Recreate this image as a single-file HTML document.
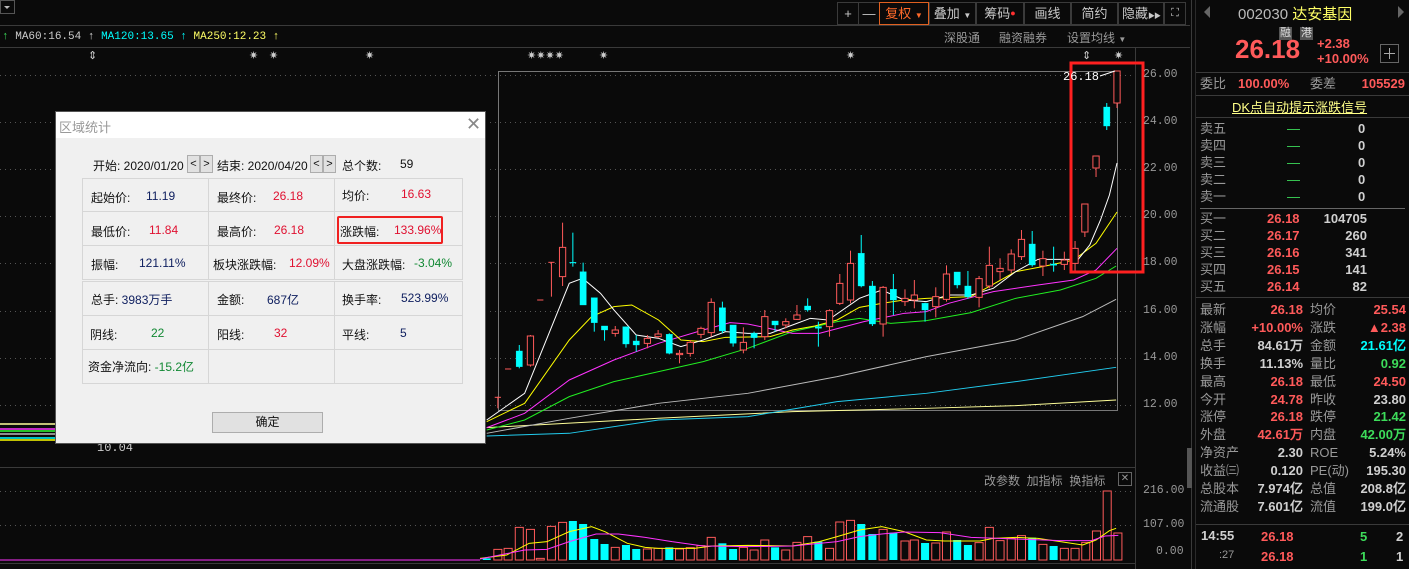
<!DOCTYPE html>
<html><head><meta charset="utf-8">
<style>
*{margin:0;padding:0;box-sizing:border-box}
body{width:1409px;height:569px;background:#0a0a0a;overflow:hidden;position:relative;font-family:"Liberation Sans","Noto Sans CJK SC",sans-serif;color:#c8c8c8}
.a{position:absolute;white-space:nowrap}
.mono{font-family:"Liberation Mono","Noto Sans CJK SC",monospace}
.tb{position:absolute;top:2px;height:23px;border:1px solid #3a3a3a;color:#c8c8c8;font-size:13px;line-height:21px;text-align:center;white-space:nowrap;overflow:hidden}
.r{color:#ff5a5a}.c{color:#00ffff}.g{color:#3ddc5a}.w{color:#d0d0d0}.y{color:#ffff55}
.rp{font-size:13px;line-height:17px}
.num{font-weight:bold;font-family:"Liberation Sans",sans-serif}
.dlg{position:absolute;left:55px;top:111px;width:431px;height:333px;background:#f0f0f0;border:1px solid #555;font-size:12px;color:#111}
.cell{position:absolute;border:1px solid #d6d6d6;}
.sb{position:absolute;width:13px;height:18px;background:#e1e1e1;border:1px solid #adadad;font-size:11px;line-height:16px;text-align:center}
</style></head><body>

<svg class="a" style="left:0;top:0" width="1409" height="569">
<line x1="0" y1="25.5" x2="1190" y2="25.5" stroke="#3a3a3a"/>
<line x1="0" y1="47.5" x2="1190" y2="47.5" stroke="#3a3a3a"/>
<line x1="1135.5" y1="47" x2="1135.5" y2="569" stroke="#3a3a3a"/>
<line x1="1191.5" y1="0" x2="1191.5" y2="569" stroke="#3a3a3a"/>
<line x1="1195.5" y1="0" x2="1195.5" y2="569" stroke="#2a2a2a"/>
<line x1="0" y1="467.5" x2="1135" y2="467.5" stroke="#3a3a3a"/>
<line x1="0" y1="563.5" x2="1135" y2="563.5" stroke="#3a3a3a"/>
<g stroke="#555" stroke-dasharray="1,4">
<line x1="0" y1="75.5" x2="1135" y2="75.5"/><line x1="0" y1="122.5" x2="1135" y2="122.5"/>
<line x1="0" y1="169.5" x2="1135" y2="169.5"/><line x1="0" y1="216.5" x2="1135" y2="216.5"/>
<line x1="0" y1="263.5" x2="1135" y2="263.5"/><line x1="0" y1="311.5" x2="1135" y2="311.5"/>
<line x1="0" y1="358.5" x2="1135" y2="358.5"/><line x1="0" y1="405.5" x2="1135" y2="405.5"/>
<line x1="0" y1="491.5" x2="1135" y2="491.5"/><line x1="0" y1="525.5" x2="1135" y2="525.5"/>
</g>
<rect x="498.5" y="71.5" width="619" height="339" fill="none" stroke="#777"/>
<g stroke-width="1.5">
<line x1="0" y1="424" x2="55" y2="424" stroke="#ffff99"/>
<line x1="0" y1="429" x2="55" y2="429" stroke="#ff33ff"/>
<line x1="0" y1="431" x2="55" y2="431" stroke="#33ff33"/>
<line x1="0" y1="434" x2="55" y2="434" stroke="#bbb"/>
<line x1="0" y1="438" x2="55" y2="438" stroke="#00ffff"/>
<line x1="0" y1="440" x2="55" y2="440" stroke="#ffff00"/>
</g>
<g transform="translate(480,200) scale(0.4464,0.3333)" stroke-width="1" fill="none">
<g>
<polyline vector-effect="non-scaling-stroke" stroke="#ffff99" points="15,683 400,655 700,635 1000,625 1200,617 1425,600"/>
<polyline vector-effect="non-scaling-stroke" stroke="#22ccee" points="15,708 200,700 400,660 600,650 800,605 1000,580 1200,545 1425,502"/>
<polyline vector-effect="non-scaling-stroke" stroke="#bbbbbb" points="15,700 200,655 400,610 600,580 800,530 1000,470 1200,420 1350,350 1425,298"/>
<polyline vector-effect="non-scaling-stroke" stroke="#22ee22" points="15,690 100,660 200,590 300,545 400,515 500,485 600,445 700,395 800,365 850,355 920,370 1000,362 1100,338 1200,295 1300,270 1380,235 1425,198"/>
<polyline vector-effect="non-scaling-stroke" stroke="#ff33ff" points="15,683 100,640 200,540 300,480 400,430 500,390 560,368 600,372 700,400 760,400 860,365 950,340 1000,335 1050,310 1150,275 1250,255 1330,240 1380,210 1427,145"/>
<polyline vector-effect="non-scaling-stroke" stroke="#ffff00" points="15,665 100,610 200,420 250,350 300,320 340,315 400,360 450,420 500,425 550,412 650,410 700,390 750,378 800,360 850,322 900,310 950,300 1000,295 1100,290 1200,215 1260,200 1330,180 1380,130 1427,36"/>
<polyline vector-effect="non-scaling-stroke" stroke="#ffffff" points="15,660 100,580 200,250 230,235 270,280 300,330 350,405 400,415 450,440 500,420 550,395 600,400 650,400 700,375 740,355 780,360 850,295 900,270 950,300 1000,305 1050,285 1100,285 1150,265 1200,215 1250,178 1300,178 1340,178 1366,135 1390,60 1410,-15 1427,-111"/>
</g>
<g stroke="#ff5a5a">
<line x1="40" y1="590" x2="40" y2="625" vector-effect="non-scaling-stroke"/><line x1="33" y1="592" x2="47" y2="592" vector-effect="non-scaling-stroke"/>
<line x1="56" y1="507" x2="70" y2="507" vector-effect="non-scaling-stroke"/>
<line x1="113" y1="405" x2="113" y2="500" vector-effect="non-scaling-stroke"/><rect x="106" y="408" width="14" height="87" fill="#0a0a0a" vector-effect="non-scaling-stroke"/>
<line x1="128" y1="300" x2="142" y2="300" vector-effect="non-scaling-stroke"/>
<line x1="160" y1="187" x2="160" y2="290" vector-effect="non-scaling-stroke"/><line x1="153" y1="187" x2="167" y2="187" vector-effect="non-scaling-stroke"/>
<line x1="185" y1="68" x2="185" y2="258" vector-effect="non-scaling-stroke"/><rect x="178" y="142" width="14" height="88" fill="#0a0a0a" vector-effect="non-scaling-stroke"/>
<line x1="303" y1="378" x2="303" y2="410" vector-effect="non-scaling-stroke"/><rect x="296" y="390" width="14" height="10" fill="#0a0a0a" vector-effect="non-scaling-stroke"/>
<line x1="375" y1="405" x2="375" y2="445" vector-effect="non-scaling-stroke"/><rect x="368" y="415" width="14" height="15" fill="#0a0a0a" vector-effect="non-scaling-stroke"/>
<line x1="399" y1="390" x2="399" y2="415" vector-effect="non-scaling-stroke"/><rect x="392" y="402" width="14" height="8" fill="#0a0a0a" vector-effect="non-scaling-stroke"/>
<line x1="447" y1="450" x2="447" y2="490" vector-effect="non-scaling-stroke"/><rect x="440" y="460" width="14" height="4" fill="#0a0a0a" vector-effect="non-scaling-stroke"/>
<line x1="471" y1="420" x2="471" y2="470" vector-effect="non-scaling-stroke"/><rect x="464" y="427" width="14" height="33" fill="#0a0a0a" vector-effect="non-scaling-stroke"/>
<line x1="495" y1="380" x2="495" y2="415" vector-effect="non-scaling-stroke"/><rect x="488" y="385" width="14" height="18" fill="#0a0a0a" vector-effect="non-scaling-stroke"/>
<line x1="518" y1="295" x2="518" y2="410" vector-effect="non-scaling-stroke"/><rect x="511" y="307" width="14" height="91" fill="#0a0a0a" vector-effect="non-scaling-stroke"/>
<line x1="590" y1="382" x2="590" y2="460" vector-effect="non-scaling-stroke"/><rect x="583" y="427" width="14" height="23" fill="#0a0a0a" vector-effect="non-scaling-stroke"/>
<line x1="638" y1="330" x2="638" y2="420" vector-effect="non-scaling-stroke"/><rect x="631" y="350" width="14" height="60" fill="#0a0a0a" vector-effect="non-scaling-stroke"/>
<line x1="685" y1="355" x2="685" y2="385" vector-effect="non-scaling-stroke"/><rect x="678" y="365" width="14" height="10" fill="#0a0a0a" vector-effect="non-scaling-stroke"/>
<line x1="710" y1="315" x2="710" y2="360" vector-effect="non-scaling-stroke"/><rect x="703" y="345" width="14" height="13" fill="#0a0a0a" vector-effect="non-scaling-stroke"/>
<line x1="783" y1="328" x2="783" y2="410" vector-effect="non-scaling-stroke"/><rect x="776" y="332" width="14" height="48" fill="#0a0a0a" vector-effect="non-scaling-stroke"/>
<line x1="806" y1="222" x2="806" y2="315" vector-effect="non-scaling-stroke"/><rect x="799" y="250" width="14" height="60" fill="#0a0a0a" vector-effect="non-scaling-stroke"/>
<line x1="830" y1="152" x2="830" y2="310" vector-effect="non-scaling-stroke"/><rect x="823" y="190" width="14" height="110" fill="#0a0a0a" vector-effect="non-scaling-stroke"/>
<line x1="903" y1="258" x2="903" y2="410" vector-effect="non-scaling-stroke"/><rect x="896" y="262" width="14" height="110" fill="#0a0a0a" vector-effect="non-scaling-stroke"/>
<line x1="952" y1="268" x2="952" y2="318" vector-effect="non-scaling-stroke"/><rect x="945" y="295" width="14" height="10" fill="#0a0a0a" vector-effect="non-scaling-stroke"/>
<line x1="973" y1="240" x2="973" y2="325" vector-effect="non-scaling-stroke"/><rect x="966" y="285" width="14" height="15" fill="#0a0a0a" vector-effect="non-scaling-stroke"/>
<line x1="1021" y1="262" x2="1021" y2="352" vector-effect="non-scaling-stroke"/><rect x="1014" y="290" width="14" height="30" fill="#0a0a0a" vector-effect="non-scaling-stroke"/>
<line x1="1045" y1="196" x2="1045" y2="305" vector-effect="non-scaling-stroke"/><rect x="1038" y="222" width="14" height="76" fill="#0a0a0a" vector-effect="non-scaling-stroke"/>
<line x1="1118" y1="228" x2="1118" y2="322" vector-effect="non-scaling-stroke"/><rect x="1111" y="236" width="14" height="56" fill="#0a0a0a" vector-effect="non-scaling-stroke"/>
<line x1="1141" y1="140" x2="1141" y2="265" vector-effect="non-scaling-stroke"/><rect x="1134" y="196" width="14" height="62" fill="#0a0a0a" vector-effect="non-scaling-stroke"/>
<line x1="1165" y1="175" x2="1165" y2="240" vector-effect="non-scaling-stroke"/><rect x="1158" y="205" width="14" height="10" fill="#0a0a0a" vector-effect="non-scaling-stroke"/>
<line x1="1190" y1="148" x2="1190" y2="220" vector-effect="non-scaling-stroke"/><rect x="1183" y="162" width="14" height="48" fill="#0a0a0a" vector-effect="non-scaling-stroke"/>
<line x1="1213" y1="90" x2="1213" y2="180" vector-effect="non-scaling-stroke"/><rect x="1206" y="118" width="14" height="52" fill="#0a0a0a" vector-effect="non-scaling-stroke"/>
<line x1="1261" y1="152" x2="1261" y2="228" vector-effect="non-scaling-stroke"/><rect x="1254" y="176" width="14" height="22" fill="#0a0a0a" vector-effect="non-scaling-stroke"/>
<line x1="1309" y1="155" x2="1309" y2="210" vector-effect="non-scaling-stroke"/><rect x="1302" y="180" width="14" height="13" fill="#0a0a0a" vector-effect="non-scaling-stroke"/>
<line x1="1333" y1="123" x2="1333" y2="220" vector-effect="non-scaling-stroke"/><rect x="1326" y="145" width="14" height="45" fill="#0a0a0a" vector-effect="non-scaling-stroke"/>
<line x1="1355" y1="12" x2="1355" y2="111" vector-effect="non-scaling-stroke"/><rect x="1348" y="12" width="14" height="84" fill="#0a0a0a" vector-effect="non-scaling-stroke"/>
<line x1="1380" y1="-132" x2="1380" y2="-69" vector-effect="non-scaling-stroke"/><rect x="1373" y="-132" width="14" height="36" fill="#0a0a0a" vector-effect="non-scaling-stroke"/>
<line x1="1427" y1="-387" x2="1427" y2="-276" vector-effect="non-scaling-stroke"/><rect x="1420" y="-387" width="14" height="96" fill="#0a0a0a" vector-effect="non-scaling-stroke"/>
</g>
<g fill="#00ffff" stroke="#00ffff">
<line x1="88" y1="435" x2="88" y2="505" vector-effect="non-scaling-stroke"/><rect x="81" y="453" width="14" height="47"/>
<line x1="208" y1="98" x2="208" y2="200" vector-effect="non-scaling-stroke"/><rect x="201" y="187" width="14" height="2"/>
<line x1="231" y1="188" x2="231" y2="315" vector-effect="non-scaling-stroke"/><rect x="224" y="215" width="14" height="100"/>
<line x1="256" y1="293" x2="256" y2="395" vector-effect="non-scaling-stroke"/><rect x="249" y="293" width="14" height="75"/>
<line x1="279" y1="378" x2="279" y2="422" vector-effect="non-scaling-stroke"/><rect x="272" y="378" width="14" height="12"/>
<line x1="327" y1="380" x2="327" y2="443" vector-effect="non-scaling-stroke"/><rect x="320" y="380" width="14" height="52"/>
<line x1="350" y1="405" x2="350" y2="455" vector-effect="non-scaling-stroke"/><rect x="343" y="423" width="14" height="12"/>
<line x1="424" y1="400" x2="424" y2="463" vector-effect="non-scaling-stroke"/><rect x="417" y="403" width="14" height="57"/>
<line x1="543" y1="305" x2="543" y2="400" vector-effect="non-scaling-stroke"/><rect x="536" y="323" width="14" height="70"/>
<line x1="567" y1="375" x2="567" y2="440" vector-effect="non-scaling-stroke"/><rect x="560" y="375" width="14" height="55"/>
<line x1="614" y1="395" x2="614" y2="445" vector-effect="non-scaling-stroke"/><rect x="607" y="400" width="14" height="13"/>
<line x1="661" y1="363" x2="661" y2="395" vector-effect="non-scaling-stroke"/><rect x="654" y="363" width="14" height="12"/>
<line x1="734" y1="295" x2="734" y2="335" vector-effect="non-scaling-stroke"/><rect x="727" y="318" width="14" height="12"/>
<line x1="758" y1="365" x2="758" y2="440" vector-effect="non-scaling-stroke"/><rect x="751" y="380" width="14" height="5"/>
<line x1="854" y1="105" x2="854" y2="262" vector-effect="non-scaling-stroke"/><rect x="847" y="160" width="14" height="98"/>
<line x1="879" y1="243" x2="879" y2="378" vector-effect="non-scaling-stroke"/><rect x="872" y="258" width="14" height="114"/>
<line x1="926" y1="222" x2="926" y2="345" vector-effect="non-scaling-stroke"/><rect x="919" y="268" width="14" height="32"/>
<line x1="997" y1="308" x2="997" y2="365" vector-effect="non-scaling-stroke"/><rect x="990" y="310" width="14" height="20"/>
<line x1="1069" y1="216" x2="1069" y2="265" vector-effect="non-scaling-stroke"/><rect x="1062" y="216" width="14" height="39"/>
<line x1="1093" y1="213" x2="1093" y2="296" vector-effect="non-scaling-stroke"/><rect x="1086" y="258" width="14" height="32"/>
<line x1="1237" y1="93" x2="1237" y2="200" vector-effect="non-scaling-stroke"/><rect x="1230" y="132" width="14" height="63"/>
<line x1="1285" y1="140" x2="1285" y2="215" vector-effect="non-scaling-stroke"/><rect x="1278" y="192" width="14" height="4"/>
<line x1="1404" y1="-291" x2="1404" y2="-210" vector-effect="non-scaling-stroke"/><rect x="1397" y="-279" width="14" height="57"/>
</g>
</g>
<g transform="translate(480,460) scale(0.4464,0.3333)">
<g fill="#0a0a0a" stroke="#ff5a5a">
<rect x="31" y="268" width="18" height="32" vector-effect="non-scaling-stroke"/>
<rect x="54" y="265" width="18" height="35" vector-effect="non-scaling-stroke"/>
<rect x="79" y="202" width="18" height="98" vector-effect="non-scaling-stroke"/>
<rect x="104" y="208" width="18" height="92" vector-effect="non-scaling-stroke"/>
<rect x="126" y="295" width="18" height="5" vector-effect="non-scaling-stroke"/>
<rect x="151" y="199" width="18" height="101" vector-effect="non-scaling-stroke"/>
<rect x="176" y="187" width="18" height="113" vector-effect="non-scaling-stroke"/>
<rect x="294" y="262" width="18" height="38" vector-effect="non-scaling-stroke"/>
<rect x="366" y="267" width="18" height="33" vector-effect="non-scaling-stroke"/>
<rect x="390" y="265" width="18" height="35" vector-effect="non-scaling-stroke"/>
<rect x="438" y="267" width="18" height="33" vector-effect="non-scaling-stroke"/>
<rect x="462" y="263" width="18" height="37" vector-effect="non-scaling-stroke"/>
<rect x="486" y="257" width="18" height="43" vector-effect="non-scaling-stroke"/>
<rect x="509" y="232" width="18" height="68" vector-effect="non-scaling-stroke"/>
<rect x="581" y="262" width="18" height="38" vector-effect="non-scaling-stroke"/>
<rect x="605" y="270" width="18" height="30" vector-effect="non-scaling-stroke"/>
<rect x="629" y="240" width="18" height="60" vector-effect="non-scaling-stroke"/>
<rect x="676" y="270" width="18" height="30" vector-effect="non-scaling-stroke"/>
<rect x="701" y="247" width="18" height="53" vector-effect="non-scaling-stroke"/>
<rect x="725" y="230" width="18" height="70" vector-effect="non-scaling-stroke"/>
<rect x="774" y="265" width="18" height="35" vector-effect="non-scaling-stroke"/>
<rect x="797" y="186" width="18" height="114" vector-effect="non-scaling-stroke"/>
<rect x="821" y="181" width="18" height="119" vector-effect="non-scaling-stroke"/>
<rect x="894" y="208" width="18" height="92" vector-effect="non-scaling-stroke"/>
<rect x="943" y="243" width="18" height="57" vector-effect="non-scaling-stroke"/>
<rect x="964" y="240" width="18" height="60" vector-effect="non-scaling-stroke"/>
<rect x="1012" y="249" width="18" height="51" vector-effect="non-scaling-stroke"/>
<rect x="1036" y="216" width="18" height="84" vector-effect="non-scaling-stroke"/>
<rect x="1109" y="248" width="18" height="52" vector-effect="non-scaling-stroke"/>
<rect x="1132" y="202" width="18" height="98" vector-effect="non-scaling-stroke"/>
<rect x="1156" y="242" width="18" height="58" vector-effect="non-scaling-stroke"/>
<rect x="1181" y="235" width="18" height="65" vector-effect="non-scaling-stroke"/>
<rect x="1204" y="227" width="18" height="73" vector-effect="non-scaling-stroke"/>
<rect x="1252" y="253" width="18" height="47" vector-effect="non-scaling-stroke"/>
<rect x="1300" y="265" width="18" height="35" vector-effect="non-scaling-stroke"/>
<rect x="1324" y="265" width="18" height="35" vector-effect="non-scaling-stroke"/>
<rect x="1348" y="247" width="18" height="53" vector-effect="non-scaling-stroke"/>
<rect x="1372" y="213" width="18" height="87" vector-effect="non-scaling-stroke"/>
<rect x="1396" y="93" width="18" height="207" vector-effect="non-scaling-stroke"/>
<rect x="1420" y="219" width="18" height="81" vector-effect="non-scaling-stroke"/>
</g>
<g fill="#00ffff">
<rect x="6" y="295" width="18" height="5"/>
<rect x="199" y="183" width="18" height="117"/>
<rect x="222" y="192" width="18" height="108"/>
<rect x="247" y="237" width="18" height="63"/>
<rect x="270" y="252" width="18" height="48"/>
<rect x="318" y="255" width="18" height="45"/>
<rect x="341" y="267" width="18" height="33"/>
<rect x="415" y="262" width="18" height="38"/>
<rect x="534" y="250" width="18" height="50"/>
<rect x="558" y="267" width="18" height="33"/>
<rect x="652" y="262" width="18" height="38"/>
<rect x="749" y="245" width="18" height="55"/>
<rect x="845" y="192" width="18" height="108"/>
<rect x="870" y="222" width="18" height="78"/>
<rect x="917" y="218" width="18" height="82"/>
<rect x="988" y="249" width="18" height="51"/>
<rect x="1060" y="240" width="18" height="60"/>
<rect x="1084" y="255" width="18" height="45"/>
<rect x="1228" y="233" width="18" height="67"/>
<rect x="1276" y="258" width="18" height="42"/>
</g>
<polyline fill="none" stroke="#ffff00" vector-effect="non-scaling-stroke" points="0,295 60,285 110,250 150,245 200,215 250,200 280,215 330,250 370,262 400,265 480,265 520,258 600,256 700,258 760,245 800,230 850,210 900,200 950,215 1000,240 1040,243 1120,243 1150,235 1200,232 1250,235 1300,245 1350,255 1380,240 1410,212 1425,205"/>
<polyline fill="none" stroke="#ff33ff" vector-effect="non-scaling-stroke" points="0,297 100,270 150,268 200,245 260,222 310,222 370,232 430,245 500,258 600,260 700,258 760,250 800,245 850,230 900,222 950,216 1030,218 1100,232 1200,237 1300,242 1370,242 1400,228 1430,226"/>
</g>
<line x1="0" y1="560" x2="480" y2="560" stroke="#ff33ff"/>
<rect x="1071" y="63" width="72" height="209" fill="none" stroke="#ff2020" stroke-width="3"/>
<line x1="1100" y1="76" x2="1115" y2="71" stroke="#fff"/>
<rect x="0.5" y="0.5" width="14" height="13" fill="none" stroke="#555"/>
<polygon points="4,6 10,6 7,9" fill="#bbb"/>
<g stroke="#3a3a3a">
<line x1="1196" y1="72.5" x2="1409" y2="72.5"/><line x1="1196" y1="95.5" x2="1409" y2="95.5"/>
<line x1="1196" y1="117.5" x2="1409" y2="117.5"/><line x1="1196" y1="297.5" x2="1409" y2="297.5"/>
<line x1="1196" y1="524.5" x2="1409" y2="524.5"/>
</g>
<line x1="1200" y1="208.5" x2="1405" y2="208.5" stroke="#666"/>
<rect x="1187" y="448" width="5" height="40" fill="#555"/>
<polygon points="1204,12 1210,6 1210,18" fill="#666"/>
<polygon points="1404,12 1398,6 1398,18" fill="#666"/>
<rect x="1380.5" y="44.5" width="18" height="18" fill="none" stroke="#666"/>
<line x1="1384" y1="53.5" x2="1395" y2="53.5" stroke="#aaa"/><line x1="1389.5" y1="48" x2="1389.5" y2="59" stroke="#aaa"/>
</svg>

<div class="tb" style="left:837px;width:22px">+</div>
<div class="tb" style="left:858px;width:22px">—</div>
<div class="tb" style="left:879px;width:50px;border-color:#e06020;color:#ff6a2a">复权 <span style="font-size:8px">▼</span></div>
<div class="tb" style="left:929px;width:47px">叠加 <span style="font-size:8px">▼</span></div>
<div class="tb" style="left:976px;width:48px">筹码<span style="color:#ff3030;font-size:9px;vertical-align:top">●</span></div>
<div class="tb" style="left:1024px;width:47px">画线</div>
<div class="tb" style="left:1071px;width:47px">简约</div>
<div class="tb" style="left:1118px;width:46px">隐藏<span style="font-size:7px;letter-spacing:-1px">▶▶</span></div>
<div class="tb" style="left:1164px;width:22px;font-size:11px">⛶</div>

<div class="a mono" style="left:2px;top:30px;font-size:11px;line-height:14px"><span class="g">↑</span> <span style="color:#ccc">MA60:16.54</span> <span style="color:#ddd">↑</span> <span class="c">MA120:13.65</span> <span class="c">↑</span> <span style="color:#ffff66">MA250:12.23</span> <span style="color:#ffff66">↑</span></div>
<div class="a" style="left:944px;top:29px;font-size:12px;color:#999">深股通</div>
<div class="a" style="left:999px;top:29px;font-size:12px;color:#999">融资融券</div>
<div class="a" style="left:1067px;top:29px;font-size:12px;color:#999">设置均线 <span style="font-size:8px">▼</span></div>

<div class="a" style="top:49px;font-size:11px;color:#ccc;left:0;width:1135px;height:14px">
<span class="a" style="left:88px">⇕</span><span class="a" style="left:249px">✷</span><span class="a" style="left:269px">✷</span><span class="a" style="left:365px">✷</span><span class="a" style="left:527px">✷✷✷✷</span><span class="a" style="left:599px">✷</span><span class="a" style="left:846px">✷</span><span class="a" style="left:1082px">⇕</span><span class="a" style="left:1114px">✷</span></div>

<div class="a mono" style="left:1063px;top:70px;font-size:12px;color:#fff">26.18</div>
<div class="a mono" style="left:97px;top:441px;font-size:12px;color:#ccc">10.04</div>

<div class="a mono" style="left:1143px;top:0;font-size:11.5px;color:#999;line-height:12px">
<div class="a" style="top:69px">26.00</div><div class="a" style="top:116px">24.00</div><div class="a" style="top:163px">22.00</div><div class="a" style="top:210px">20.00</div><div class="a" style="top:257px">18.00</div><div class="a" style="top:305px">16.00</div><div class="a" style="top:352px">14.00</div><div class="a" style="top:399px">12.00</div>
<div class="a" style="top:485px">216.00</div><div class="a" style="top:519px">107.00</div><div class="a" style="top:546px;left:13px">0.00</div>
</div>
<div class="a" style="left:984px;top:472px;font-size:12px;color:#999">改参数&nbsp;&nbsp;加指标&nbsp;&nbsp;换指标</div>
<div class="a" style="left:1118px;top:472px;width:14px;height:14px;border:1px solid #666;font-size:10px;line-height:12px;text-align:center;color:#999">✕</div>

<div class="a" style="left:1238px;top:3px;font-size:15px;color:#bbb">002030 <span style="color:#ffff66">达安基因</span></div>
<div class="a" style="left:1279px;top:27px;font-size:11px;background:#555;color:#ddd;width:13px;height:13px;line-height:13px;text-align:center">融</div>
<div class="a" style="left:1300px;top:27px;font-size:11px;background:#555;color:#ddd;width:13px;height:13px;line-height:13px;text-align:center">港</div>
<div class="a num r" style="left:1235px;top:35px;font-size:26px;line-height:28px">26.18</div>
<div class="a num r" style="left:1317px;top:36px;font-size:13px">+2.38</div>
<div class="a num r" style="left:1317px;top:51px;font-size:13px">+10.00%</div>
<div class="a rp" style="left:1200px;top:75px;color:#999">委比</div>
<div class="a rp num r" style="left:1238px;top:75px">100.00%</div>
<div class="a rp" style="left:1310px;top:75px;color:#999">委差</div>
<div class="a rp num r" style="right:4px;top:75px">105529</div>
<div class="a" style="left:1232px;top:97px;font-size:13px;color:#ffff88;text-decoration:underline">DK点自动提示涨跌信号</div>

<div class="a rp" style="left:1200px;top:120px;color:#999;line-height:17px">卖五<br>卖四<br>卖三<br>卖二<br>卖一</div>
<div class="a rp" style="left:1287px;top:120px;color:#3ddc5a;line-height:17px">—<br>—<br>—<br>—<br>—</div>
<div class="a rp num w" style="left:1358px;top:120px;line-height:17px">0<br>0<br>0<br>0<br>0</div>
<div class="a rp" style="left:1200px;top:210px;color:#999;line-height:17px">买一<br>买二<br>买三<br>买四<br>买五</div>
<div class="a rp num r" style="left:1267px;top:210px;line-height:17px">26.18<br>26.17<br>26.16<br>26.15<br>26.14</div>
<div class="a rp num w" style="right:42px;top:210px;line-height:17px;text-align:right">104705<br>260<br>341<br>141<br>82</div>

<div class="a rp" style="left:1200px;top:301px;color:#999;line-height:17.9px">最新<br>涨幅<br>总手<br>换手<br>最高<br>今开<br>涨停<br>外盘<br>净资产<br>收益㈢<br>总股本<br>流通股</div>
<div class="a rp num" style="right:106px;top:301px;line-height:17.9px;text-align:right"><span class="r">26.18</span><br><span class="r">+10.00%</span><br><span class="w">84.61万</span><br><span class="w">11.13%</span><br><span class="r">26.18</span><br><span class="r">24.78</span><br><span class="r">26.18</span><br><span class="r">42.61万</span><br><span class="w">2.30</span><br><span class="w">0.120</span><br><span class="w">7.974亿</span><br><span class="w">7.601亿</span></div>
<div class="a rp" style="left:1310px;top:301px;color:#999;line-height:17.9px">均价<br>涨跌<br>金额<br>量比<br>最低<br>昨收<br>跌停<br>内盘<br>ROE<br>PE(动)<br>总值<br>流值</div>
<div class="a rp num" style="right:3px;top:301px;line-height:17.9px;text-align:right"><span class="r">25.54</span><br><span class="r">▲2.38</span><br><span class="c">21.61亿</span><br><span class="g">0.92</span><br><span class="r">24.50</span><br><span class="w">23.80</span><br><span class="g">21.42</span><br><span class="g">42.00万</span><br><span class="w">5.24%</span><br><span class="w">195.30</span><br><span class="w">208.8亿</span><br><span class="w">199.0亿</span></div>

<div class="a rp num w" style="left:1201px;top:527px">14:55</div>
<div class="a rp" style="left:1219px;top:547px;color:#999;font-size:11px">:27</div>
<div class="a rp num r" style="left:1261px;top:527px;line-height:20px">26.18<br>26.18</div>
<div class="a rp num g" style="left:1360px;top:527px;line-height:20px">5<br>1</div>
<div class="a rp num w" style="left:1396px;top:527px;line-height:20px">2<br>1</div>

<div class="dlg">
 <div style="position:absolute;left:0;top:0;width:429px;height:26px;background:#fff"></div>
 <div class="a" style="left:3px;top:5px;font-size:13px;color:#999">区域统计</div>
 <div class="a" style="left:410px;top:2px;font-size:18px;color:#888">✕</div>
 <div class="a" style="left:37px;top:45px">开始: 2020/01/20</div>
 <div class="sb" style="left:131px;top:43px">&lt;</div><div class="sb" style="left:144px;top:43px">&gt;</div>
 <div class="a" style="left:161px;top:45px">结束: 2020/04/20</div>
 <div class="sb" style="left:254px;top:43px">&lt;</div><div class="sb" style="left:267px;top:43px">&gt;</div>
 <div class="a" style="left:286px;top:45px">总个数:</div><div class="a" style="left:344px;top:45px">59</div>

 <div class="cell" style="left:26px;top:66px;width:127px;height:34px"></div>
 <div class="cell" style="left:152px;top:66px;width:127px;height:34px"></div>
 <div class="cell" style="left:278px;top:66px;width:129px;height:34px"></div>
 <div class="cell" style="left:26px;top:99px;width:127px;height:35px"></div>
 <div class="cell" style="left:152px;top:99px;width:127px;height:35px"></div>
 <div class="cell" style="left:278px;top:99px;width:129px;height:35px"></div>
 <div class="cell" style="left:26px;top:133px;width:127px;height:35px"></div>
 <div class="cell" style="left:152px;top:133px;width:127px;height:35px"></div>
 <div class="cell" style="left:278px;top:133px;width:129px;height:35px"></div>
 <div class="cell" style="left:26px;top:169px;width:127px;height:35px"></div>
 <div class="cell" style="left:152px;top:169px;width:127px;height:35px"></div>
 <div class="cell" style="left:278px;top:169px;width:129px;height:35px"></div>
 <div class="cell" style="left:26px;top:203px;width:127px;height:35px"></div>
 <div class="cell" style="left:152px;top:203px;width:127px;height:35px"></div>
 <div class="cell" style="left:278px;top:203px;width:129px;height:35px"></div>
 <div class="cell" style="left:26px;top:237px;width:127px;height:35px"></div>
 <div class="cell" style="left:152px;top:237px;width:127px;height:35px"></div>
 <div class="cell" style="left:278px;top:237px;width:129px;height:35px"></div>
 <div class="a" style="left:281px;top:104px;width:106px;height:28px;border:2px solid #f02020;border-radius:2px"></div>

 <div class="a" style="left:35px;top:77px">起始价:</div><div class="a" style="left:90px;top:77px;color:#102060">11.19</div>
 <div class="a" style="left:161px;top:77px">最终价:</div><div class="a" style="left:217px;top:77px;color:#e01030">26.18</div>
 <div class="a" style="left:286px;top:75px">均价:</div><div class="a" style="left:345px;top:75px;color:#e01030">16.63</div>
 <div class="a" style="left:35px;top:111px">最低价:</div><div class="a" style="left:93px;top:111px;color:#e01030">11.84</div>
 <div class="a" style="left:161px;top:111px">最高价:</div><div class="a" style="left:218px;top:111px;color:#e01030">26.18</div>
 <div class="a" style="left:284px;top:111px">涨跌幅:</div><div class="a" style="left:338px;top:111px;color:#e01030">133.96%</div>
 <div class="a" style="left:35px;top:144px">振幅:</div><div class="a" style="left:83px;top:144px;color:#102060">121.11%</div>
 <div class="a" style="left:157px;top:144px">板块涨跌幅:</div><div class="a" style="left:233px;top:144px;color:#e01030">12.09%</div>
 <div class="a" style="left:286px;top:144px">大盘涨跌幅:</div><div class="a" style="left:358px;top:144px;color:#118833">-3.04%</div>
 <div class="a" style="left:35px;top:179px">总手: <span style="color:#102060">3983万手</span></div>
 <div class="a" style="left:161px;top:179px">金额:</div><div class="a" style="left:211px;top:179px;color:#102060">687亿</div>
 <div class="a" style="left:286px;top:179px">换手率:</div><div class="a" style="left:345px;top:179px;color:#102060">523.99%</div>
 <div class="a" style="left:34px;top:214px">阴线:</div><div class="a" style="left:95px;top:214px;color:#118833">22</div>
 <div class="a" style="left:161px;top:214px">阳线:</div><div class="a" style="left:218px;top:214px;color:#e01030">32</div>
 <div class="a" style="left:286px;top:214px">平线:</div><div class="a" style="left:344px;top:214px;color:#102060">5</div>
 <div class="a" style="left:32px;top:246px">资金净流向: <span style="color:#118833">-15.2亿</span></div>

 <div class="a" style="left:156px;top:300px;width:111px;height:21px;background:#e1e1e1;border:1px solid #adadad;text-align:center;line-height:19px">确定</div>
</div>
</body></html>
